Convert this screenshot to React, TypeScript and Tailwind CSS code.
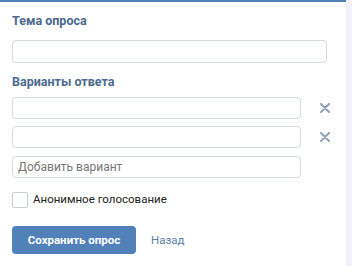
export default function App() {
  return (
    <div className="flex h-[266px] w-[352px] bg-[#f0f2f5] font-['Roboto',sans-serif]">
      <div className="flex w-[346px] flex-col border-t-2 border-[#5181b8] bg-white px-3 pt-[11px]">
        <div className="text-[12.5px] font-bold leading-4 text-[#4b6a8e]">Тема опроса</div>
        <input className="mt-[11px] h-[23px] w-[315px] rounded-[4px] border border-[#d3d9de] bg-white px-2 text-[12px] outline-none" />
        <div className="mt-[11px] text-[12.5px] font-bold leading-4 text-[#4b6a8e]">Варианты ответа</div>
        <div className="mt-[7px] flex flex-col">
          {[0, 1].map((i) => (
            <div key={i} className={`flex items-center ${i === 1 ? "mt-[7px]" : ""}`}>
              <input className="h-[22px] w-[289px] rounded-[4px] border border-[#d3d9de] bg-white px-2 text-[12px] outline-none" />
              <svg className="ml-[19px] h-[10px] w-[10px]" viewBox="0 0 10 10">
                <path d="M1 1L9 9M9 1L1 9" stroke="#8fa1b6" strokeWidth="2" strokeLinecap="round" />
              </svg>
            </div>
          ))}
          <input
            placeholder="Добавить вариант"
            className="mt-2 h-[22px] w-[289px] rounded-[4px] border border-[#d3d9de] bg-white px-[5px] text-[12px] text-black outline-none placeholder:text-[#777]"
          />
        </div>
        <label className="mt-[13px] flex items-center gap-[5px]">
          <span className="h-4 w-4 rounded-[2px] border border-[#c5cdd6] bg-white" />
          <span className="text-[11.5px] text-[#222]">Анонимное голосование</span>
        </label>
        <div className="mt-[18px] flex items-center gap-[15px]">
          <button className="h-[28px] w-[124px] rounded-[4px] bg-[#5181b8] text-[11.5px] font-bold text-white">
            Сохранить опрос
          </button>
          <span className="text-[11.5px] text-[#5b7ea8]">Назад</span>
        </div>
      </div>
    </div>
  );
}
